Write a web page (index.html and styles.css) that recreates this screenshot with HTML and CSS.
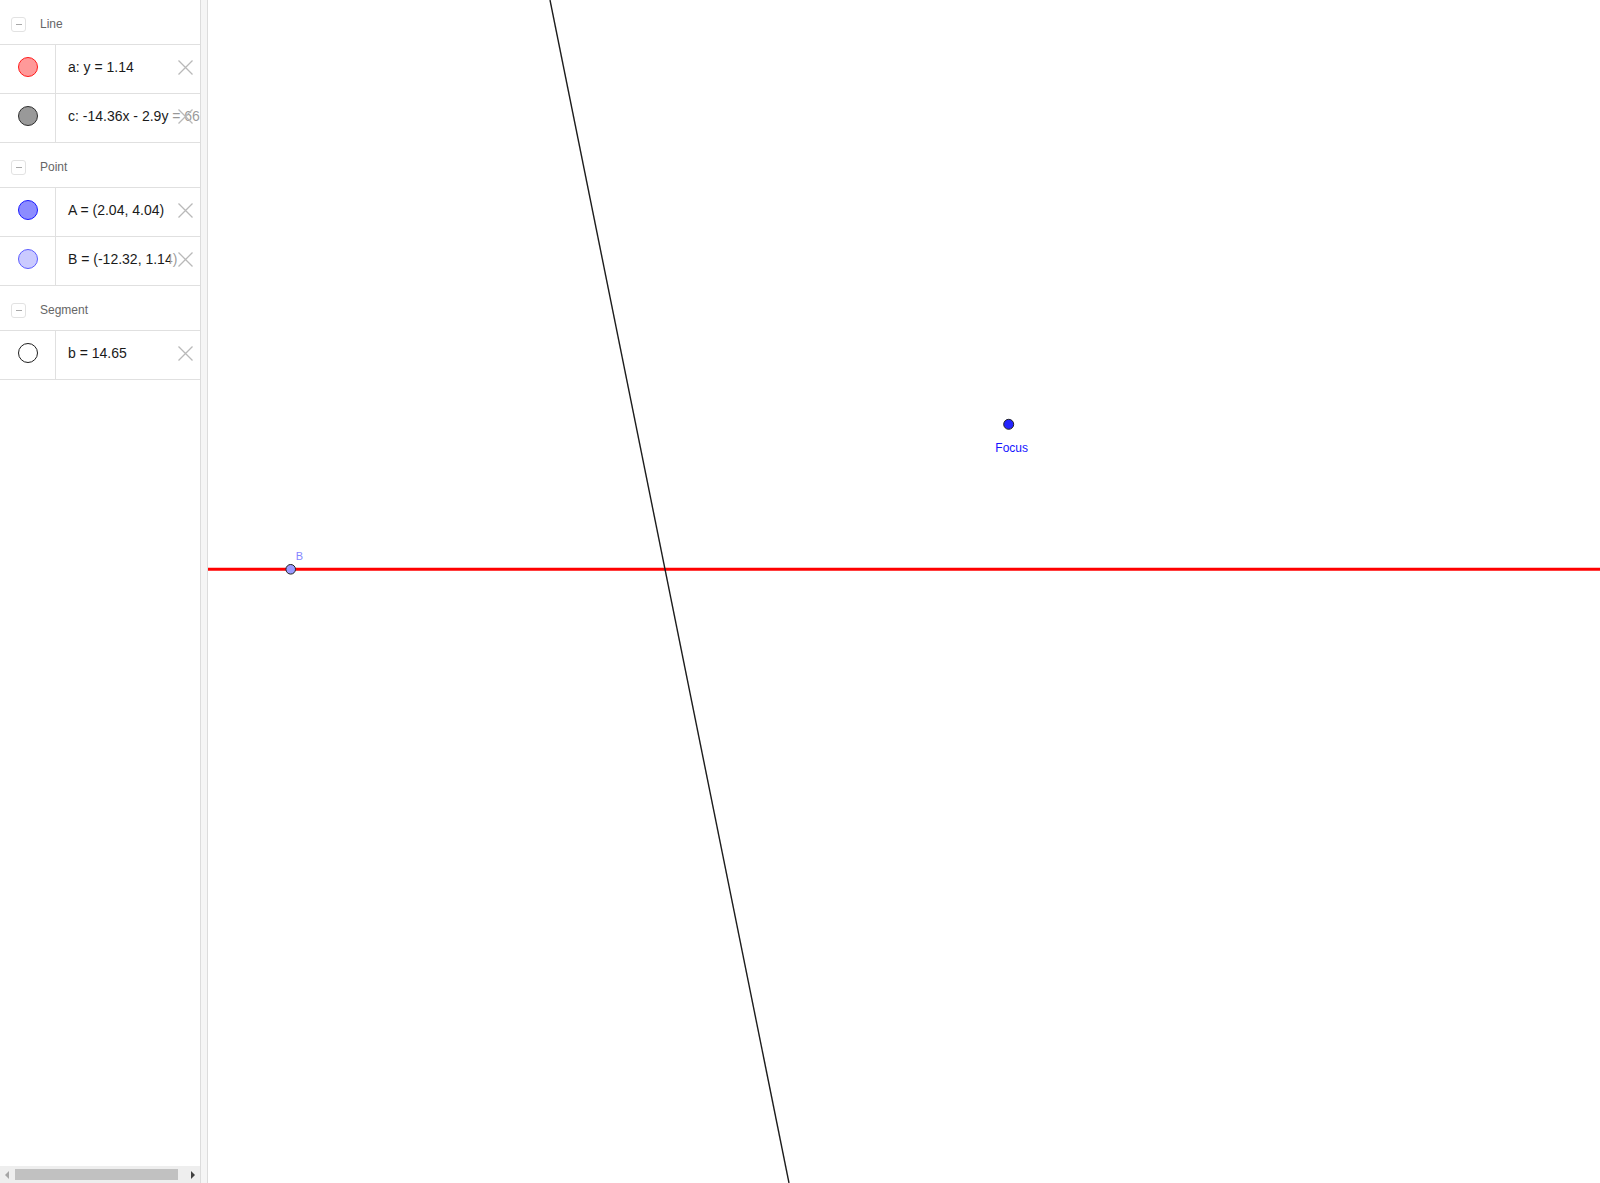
FILE: index.html
```html
<!DOCTYPE html>
<html>
<head>
<meta charset="utf-8">
<link rel="stylesheet" href="styles.css">
</head>
<body>
<div class="app">
  <aside class="algebra">
    <div class="list">
      <div class="group-head"><span class="toggle"></span><span class="group-name">Line</span></div>
      <div class="item">
        <div class="marble-cell"><span class="marble marble-red"></span></div>
        <div class="formula">a: y = 1.14</div>
        <span class="del"><svg viewBox="0 0 15 15" width="15" height="15"><path d="M0.5 0.5 L14.5 14.5 M14.5 0.5 L0.5 14.5"/></svg></span>
      </div>
      <div class="item">
        <div class="marble-cell"><span class="marble marble-gray"></span></div>
        <div class="formula">c: -14.36x - 2.9y = 66.38</div>
        <span class="del"><svg viewBox="0 0 15 15" width="15" height="15"><path d="M0.5 0.5 L14.5 14.5 M14.5 0.5 L0.5 14.5"/></svg></span>
      </div>
      <div class="group-head"><span class="toggle"></span><span class="group-name">Point</span></div>
      <div class="item">
        <div class="marble-cell"><span class="marble marble-blue"></span></div>
        <div class="formula">A = (2.04, 4.04)</div>
        <span class="del"><svg viewBox="0 0 15 15" width="15" height="15"><path d="M0.5 0.5 L14.5 14.5 M14.5 0.5 L0.5 14.5"/></svg></span>
      </div>
      <div class="item">
        <div class="marble-cell"><span class="marble marble-lightblue"></span></div>
        <div class="formula">B = (-12.32, 1.14)</div>
        <span class="del"><svg viewBox="0 0 15 15" width="15" height="15"><path d="M0.5 0.5 L14.5 14.5 M14.5 0.5 L0.5 14.5"/></svg></span>
      </div>
      <div class="group-head"><span class="toggle"></span><span class="group-name">Segment</span></div>
      <div class="item">
        <div class="marble-cell"><span class="marble marble-white"></span></div>
        <div class="formula">b = 14.65</div>
        <span class="del"><svg viewBox="0 0 15 15" width="15" height="15"><path d="M0.5 0.5 L14.5 14.5 M14.5 0.5 L0.5 14.5"/></svg></span>
      </div>
    </div>
    <div class="hscroll">
      <span class="arrow-cell"><span class="arrow arrow-left"></span></span>
      <span class="thumb"></span>
      <span class="arrow-cell arrow-cell-right"><span class="arrow arrow-right"></span></span>
    </div>
  </aside>
  <div class="splitter"></div>
  <main class="canvas">
    <svg class="graphics" width="1392" height="1183" viewBox="0 0 1392 1183">
      <line x1="0" y1="569.3" x2="1392" y2="569.3" stroke="#ff0000" stroke-width="3"/>
      <line x1="342" y1="0" x2="581" y2="1183" stroke="#1c1c1c" stroke-width="1.4"/>
      <circle cx="82.7" cy="569.3" r="4.8" fill="#9a9aff" stroke="#222" stroke-width="1"/>
      <text class="label label-b" x="87.7" y="560">B</text>
      <circle cx="800.7" cy="424.3" r="5" fill="#2424ff" stroke="#222" stroke-width="1"/>
      <text class="label label-focus" x="787.3" y="452">Focus</text>
    </svg>
  </main>
</div>
</body>
</html>
```

FILE: styles.css
```css
html, body {
  margin: 0;
  padding: 0;
  background: #ffffff;
}

.app {
  display: flex;
  width: 1600px;
  height: 1183px;
  overflow: hidden;
  font-family: "Liberation Sans", Arial, sans-serif;
}

.algebra {
  width: 200px;
  flex: 0 0 200px;
  border-right: 1px solid #dcdcdc;
  display: flex;
  flex-direction: column;
  background: #ffffff;
  overflow: hidden;
}

.list {
  flex: 1 1 auto;
}

.group-head {
  height: 45px;
  border-bottom: 1px solid #e0e0e0;
  display: flex;
  align-items: center;
  padding-top: 4px;
  box-sizing: border-box;
}

.toggle {
  width: 13px;
  height: 13px;
  margin-left: 11px;
  border: 1px solid #e2e2e2;
  border-radius: 3px;
  position: relative;
  flex: 0 0 auto;
}

.toggle::after {
  content: "";
  position: absolute;
  left: 4px;
  top: 6px;
  width: 6px;
  height: 1px;
  background: #a8a8a8;
}

.group-name {
  margin-left: 14px;
  font-size: 12px;
  color: #666666;
  margin-top: -1px;
}

.item {
  height: 48px;
  border-bottom: 1px solid #e0e0e0;
  display: flex;
  align-items: stretch;
  position: relative;
}

.marble-cell {
  width: 56px;
  flex: 0 0 56px;
  border-right: 1px solid #e0e0e0;
  display: flex;
  align-items: center;
  justify-content: center;
  padding-bottom: 5px;
  box-sizing: border-box;
}

.marble {
  width: 18px;
  height: 18px;
  border-radius: 50%;
  border: 1px solid #333;
}

.marble-red {
  background: #ff9999;
  border-color: #ff1a1a;
}

.marble-gray {
  background: #999999;
  border-color: #2e2e2e;
}

.marble-blue {
  background: #8c8cff;
  border-color: #1a1aff;
}

.marble-lightblue {
  background: #cacaff;
  border-color: #5c5cff;
}

.marble-white {
  background: #ffffff;
  border-color: #1e1e1e;
}

.formula {
  flex: 1 1 auto;
  display: flex;
  align-items: center;
  padding-left: 12px;
  padding-bottom: 5px;
  font-size: 14px;
  color: #1a1a1a;
  white-space: nowrap;
  overflow: hidden;
}

.del {
  position: absolute;
  right: 0;
  top: 0;
  width: 30px;
  height: 44px;
  display: flex;
  align-items: center;
  justify-content: center;
  background: rgba(255, 255, 255, 0.55);
}

.del svg {
  display: block;
  margin-left: 1px;
}

.del path {
  stroke: #b9b9b9;
  stroke-width: 1.3;
  fill: none;
}

.hscroll {
  height: 17px;
  flex: 0 0 17px;
  background: #eeeeee;
  display: flex;
  align-items: center;
}

.arrow-cell {
  width: 15px;
  height: 17px;
  display: flex;
  align-items: center;
  padding-left: 5px;
  box-sizing: border-box;
}

.arrow-cell-right {
  width: 22px;
  padding-left: 13px;
}

.arrow {
  width: 0;
  height: 0;
  border-top: 4px solid transparent;
  border-bottom: 4px solid transparent;
}

.arrow-left {
  border-right: 4px solid #a6a6a6;
}

.arrow-right {
  border-left: 4px solid #404040;
}

.thumb {
  width: 163px;
  height: 11px;
  background: #c1c1c1;
  flex: 0 0 163px;
}

.splitter {
  width: 6px;
  flex: 0 0 6px;
  background: #f5f5f5;
  border-right: 1px solid #dcdcdc;
}

.canvas {
  flex: 1 1 auto;
  position: relative;
  background: #ffffff;
  overflow: hidden;
}

.graphics {
  display: block;
}

.label {
  font-family: "Liberation Sans", Arial, sans-serif;
}

.label-b {
  font-size: 11px;
  fill: #8585ff;
}

.label-focus {
  font-size: 12px;
  fill: #1414ff;
}
```
